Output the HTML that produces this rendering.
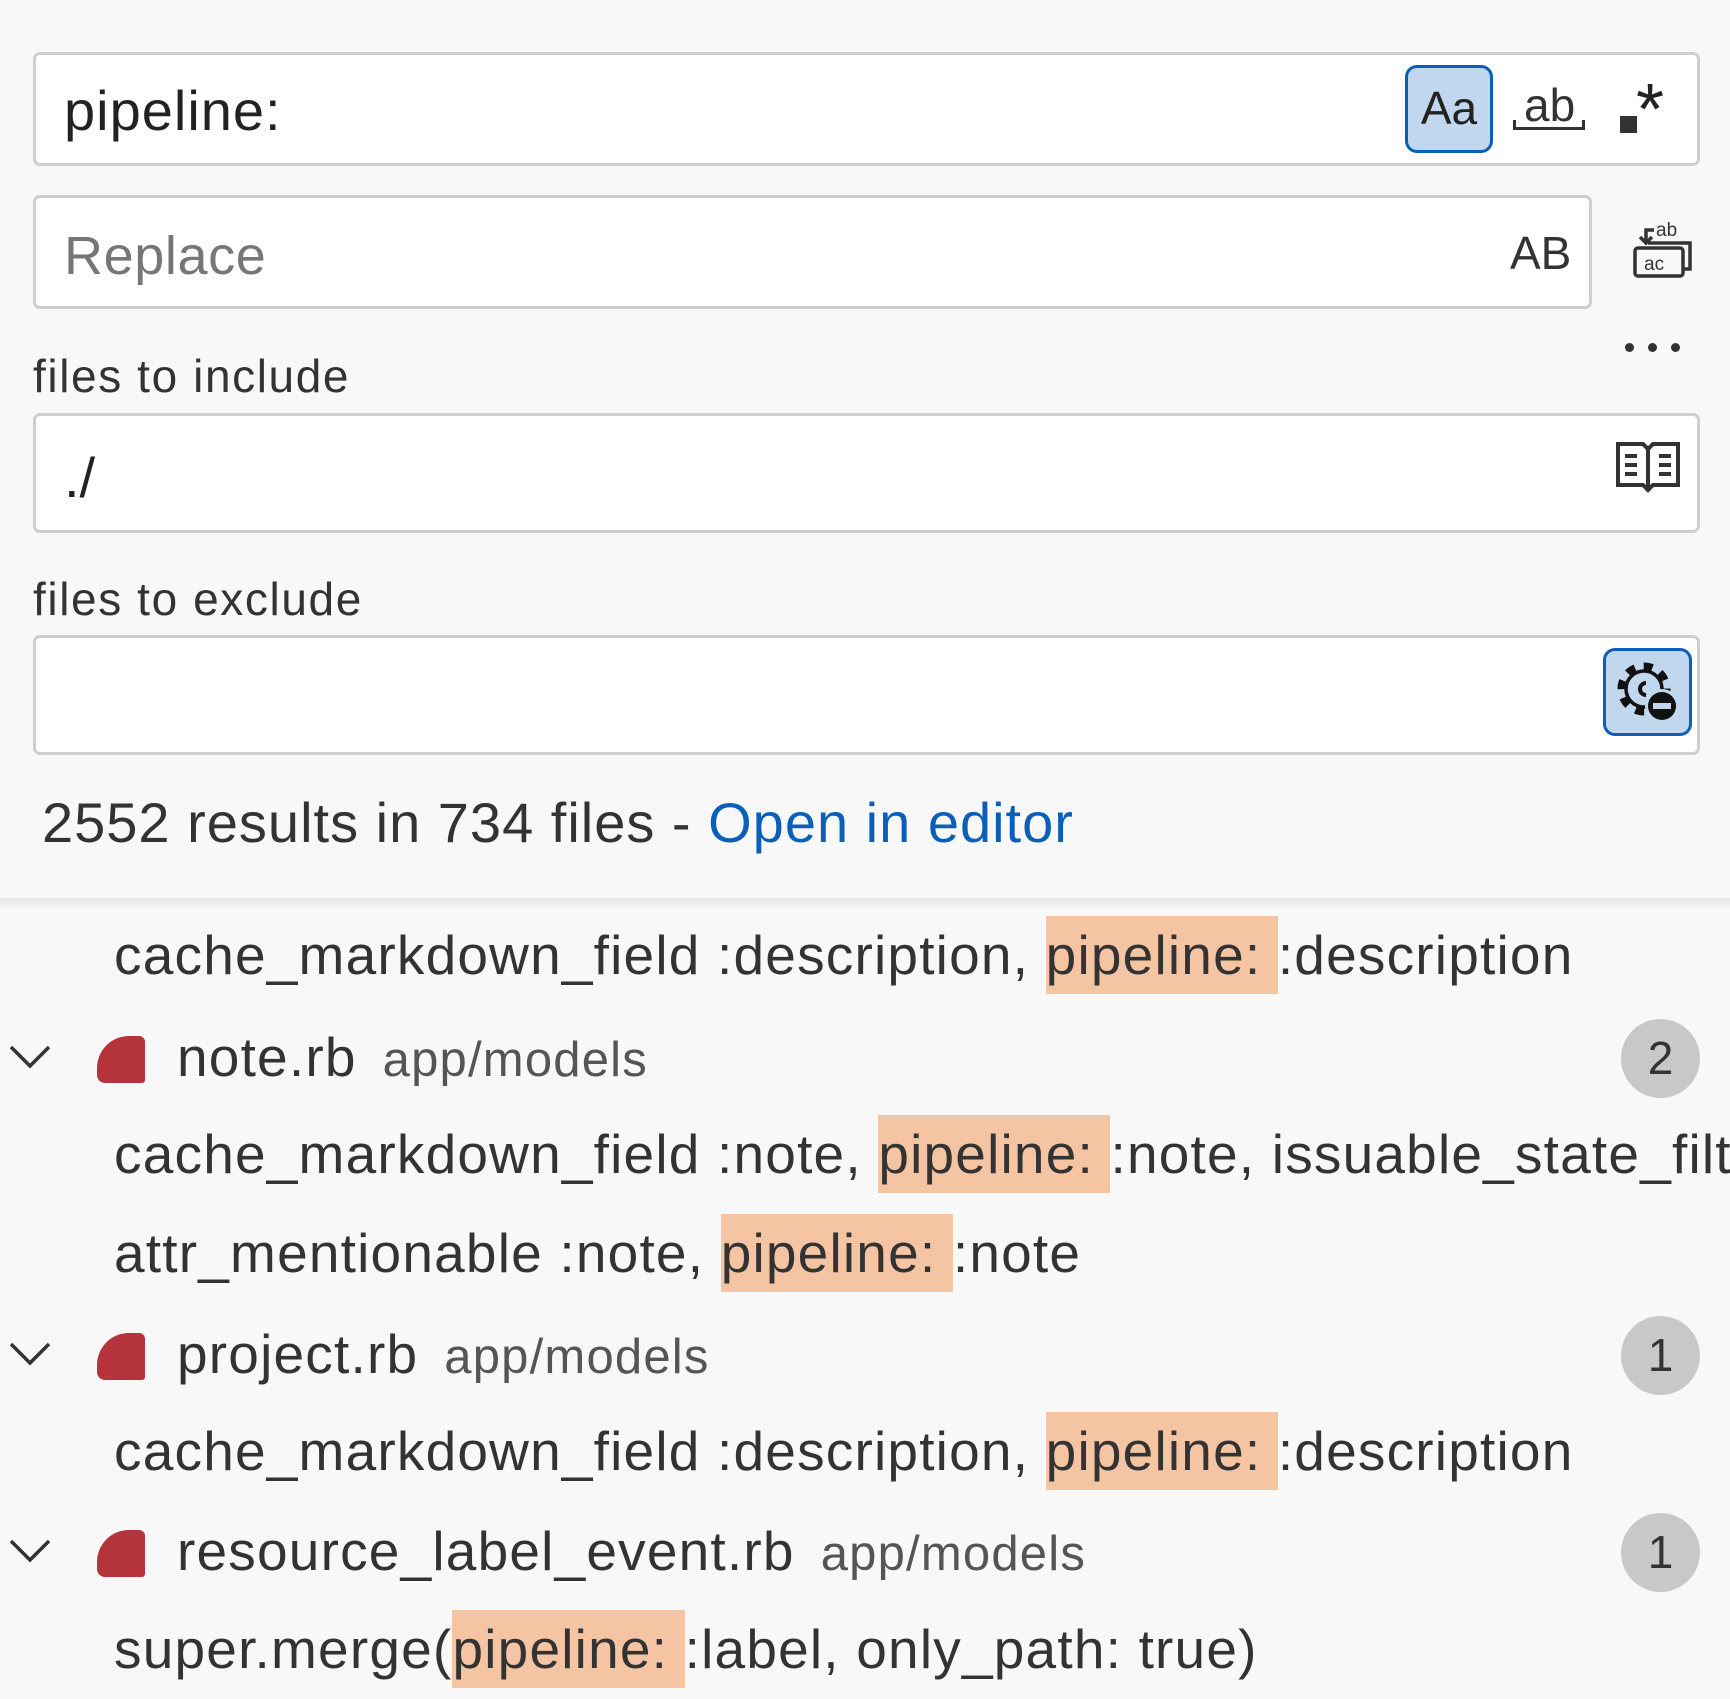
<!DOCTYPE html>
<html><head><meta charset="utf-8"><style>
*{margin:0;padding:0;box-sizing:border-box}
html,body{width:1730px;height:1689px;overflow:hidden;background:#f8f8f8;font-family:"Liberation Sans",sans-serif;color:#333}
.box{position:absolute;background:#fff;border:3px solid #cfcfcf;border-radius:7px}
.abs{position:absolute;white-space:nowrap}
.lbl{font-size:46px;color:#333;letter-spacing:1.6px}
.row{position:absolute;left:0;width:1730px;height:99px;white-space:nowrap;overflow:hidden;font-size:55px;line-height:99px;color:#333;letter-spacing:1.2px}
.m{padding-left:114px}
.hl{background:#f5c4a3;display:inline-block;line-height:78px}
.chev{position:absolute;left:8px;top:34px}
.ruby{position:absolute;left:97px;top:28px;width:48px;height:47px;background:#b5343b;border-radius:32px 6px 3px 8px}
.fn{position:absolute;left:177px;top:0}
.dir{color:#555;font-size:49px;margin-left:26px}
.badge{position:absolute;left:1621px;top:11px;width:79px;height:79px;border-radius:50%;background:#c8c8c8;text-align:center;line-height:79px;font-size:46px;color:#333;letter-spacing:0}
</style></head><body>

<div class="box" style="left:33px;top:52px;width:1667px;height:114px"></div>
<div class="abs" style="left:64px;top:78px;font-size:56px;color:#222;letter-spacing:1px">pipeline:</div>
<div class="abs" style="left:1405px;top:65px;width:88px;height:88px;background:#c0d7ee;border:3px solid #0b5fb8;border-radius:12px;font-size:46px;line-height:80px;text-align:center;color:#222">Aa</div>
<div class="abs" style="left:1524px;top:78px;font-size:46px;color:#333">ab</div>
<div class="abs" style="left:1513px;top:120px;width:72px;height:10px;border:3px solid #333;border-top:none"></div>
<div class="abs" style="left:1620px;top:116px;width:17px;height:17px;background:#333"></div>
<div class="abs" style="left:1636px;top:80px;font-size:72px;color:#222;line-height:60px">*</div>

<div class="box" style="left:33px;top:195px;width:1559px;height:114px"></div>
<div class="abs" style="left:64px;top:225px;font-size:54px;color:#767676;letter-spacing:0.6px">Replace</div>
<div class="abs" style="left:1510px;top:226px;font-size:46px;color:#333">AB</div>
<svg class="abs" style="left:1630px;top:218px" width="66" height="66" viewBox="0 0 66 66" fill="none" stroke="#333" stroke-width="3.5">
<path d="M24 12h-8v12M10 19l6 6 6-6"/>
<text x="26" y="18" font-size="19" fill="#333" stroke="none" font-family="Liberation Sans">ab</text>
<path d="M18 25h42v26h-6"/>
<rect x="5" y="30" width="48" height="28" rx="3"/>
<text x="14" y="52" font-size="19" fill="#333" stroke="none" font-family="Liberation Sans">ac</text>
</svg>
<div class="abs" style="left:1625px;top:343px;width:60px;height:12px">
<span style="position:absolute;left:0;width:9px;height:9px;border-radius:50%;background:#333"></span>
<span style="position:absolute;left:23px;width:9px;height:9px;border-radius:50%;background:#333"></span>
<span style="position:absolute;left:46px;width:9px;height:9px;border-radius:50%;background:#333"></span>
</div>

<div class="abs lbl" style="left:33px;top:349px">files to include</div>
<div class="box" style="left:33px;top:413px;width:1667px;height:120px"></div>
<div class="abs" style="left:64px;top:445px;font-size:56px;color:#222">./</div>
<svg class="abs" style="left:1615px;top:441px" width="66" height="56" viewBox="0 0 66 56" fill="none" stroke="#333" stroke-width="4">
<path d="M3 3h25l5 5 5-5h25v41H38l-5 5-5-5H3z"/><path d="M33 8v41"/>
<path d="M10 15h12M10 24h12M10 33h12M44 15h12M44 24h12M44 33h12"/>
</svg>

<div class="abs lbl" style="left:33px;top:572px">files to exclude</div>
<div class="box" style="left:33px;top:635px;width:1667px;height:120px"></div>
<div class="abs" style="left:1603px;top:648px;width:89px;height:88px;background:#c0d7ee;border:3px solid #0b5fb8;border-radius:12px"></div>
<svg class="abs" style="left:1612px;top:656px" width="72" height="72" viewBox="0 0 72 72">
<circle cx="32" cy="33" r="22" fill="none" stroke="#111" stroke-width="9" stroke-dasharray="8.6 8.6"/>
<circle cx="32" cy="33" r="18" fill="#c0d7ee" stroke="#111" stroke-width="3.5"/>
<path d="M34 27a6 6 0 1 0 0 12" fill="none" stroke="#111" stroke-width="4"/>
<circle cx="50" cy="50" r="17" fill="#c0d7ee"/>
<circle cx="50" cy="50" r="14" fill="#111"/><rect x="41" y="47" width="18" height="6" fill="#c0d7ee"/>
</svg>

<div class="abs" style="left:42px;top:790px;font-size:56px;color:#333;letter-spacing:1px">2552 results in 734 files - <span style="color:#0b5fb8">Open in editor</span></div>

<div class="abs" style="left:0;top:898px;width:1730px;height:12px;background:linear-gradient(#e6e6e6,#f8f8f8)"></div>

<div class="row m" style="top:906px">cache_markdown_field :description, <span class="hl">pipeline:&nbsp;</span>:description</div>

<div class="row" style="top:1008px">
<svg class="chev" width="44" height="30" viewBox="0 0 44 30"><path d="M3 5l19 19 19-19" fill="none" stroke="#333" stroke-width="3.5"/></svg>
<div class="ruby"></div><span class="fn">note.rb<span class="dir">app/models</span></span><div class="badge">2</div></div>

<div class="row m" style="top:1105px">cache_markdown_field :note, <span class="hl">pipeline:&nbsp;</span>:note, issuable_state_filt...</div>
<div class="row m" style="top:1204px">attr_mentionable :note, <span class="hl">pipeline:&nbsp;</span>:note</div>

<div class="row" style="top:1305px">
<svg class="chev" width="44" height="30" viewBox="0 0 44 30"><path d="M3 5l19 19 19-19" fill="none" stroke="#333" stroke-width="3.5"/></svg>
<div class="ruby"></div><span class="fn">project.rb<span class="dir">app/models</span></span><div class="badge">1</div></div>

<div class="row m" style="top:1402px">cache_markdown_field :description, <span class="hl">pipeline:&nbsp;</span>:description</div>

<div class="row" style="top:1502px">
<svg class="chev" width="44" height="30" viewBox="0 0 44 30"><path d="M3 5l19 19 19-19" fill="none" stroke="#333" stroke-width="3.5"/></svg>
<div class="ruby"></div><span class="fn">resource_label_event.rb<span class="dir">app/models</span></span><div class="badge">1</div></div>

<div class="row m" style="top:1600px">super.merge(<span class="hl">pipeline:&nbsp;</span>:label, only_path: true)</div>

</body></html>
